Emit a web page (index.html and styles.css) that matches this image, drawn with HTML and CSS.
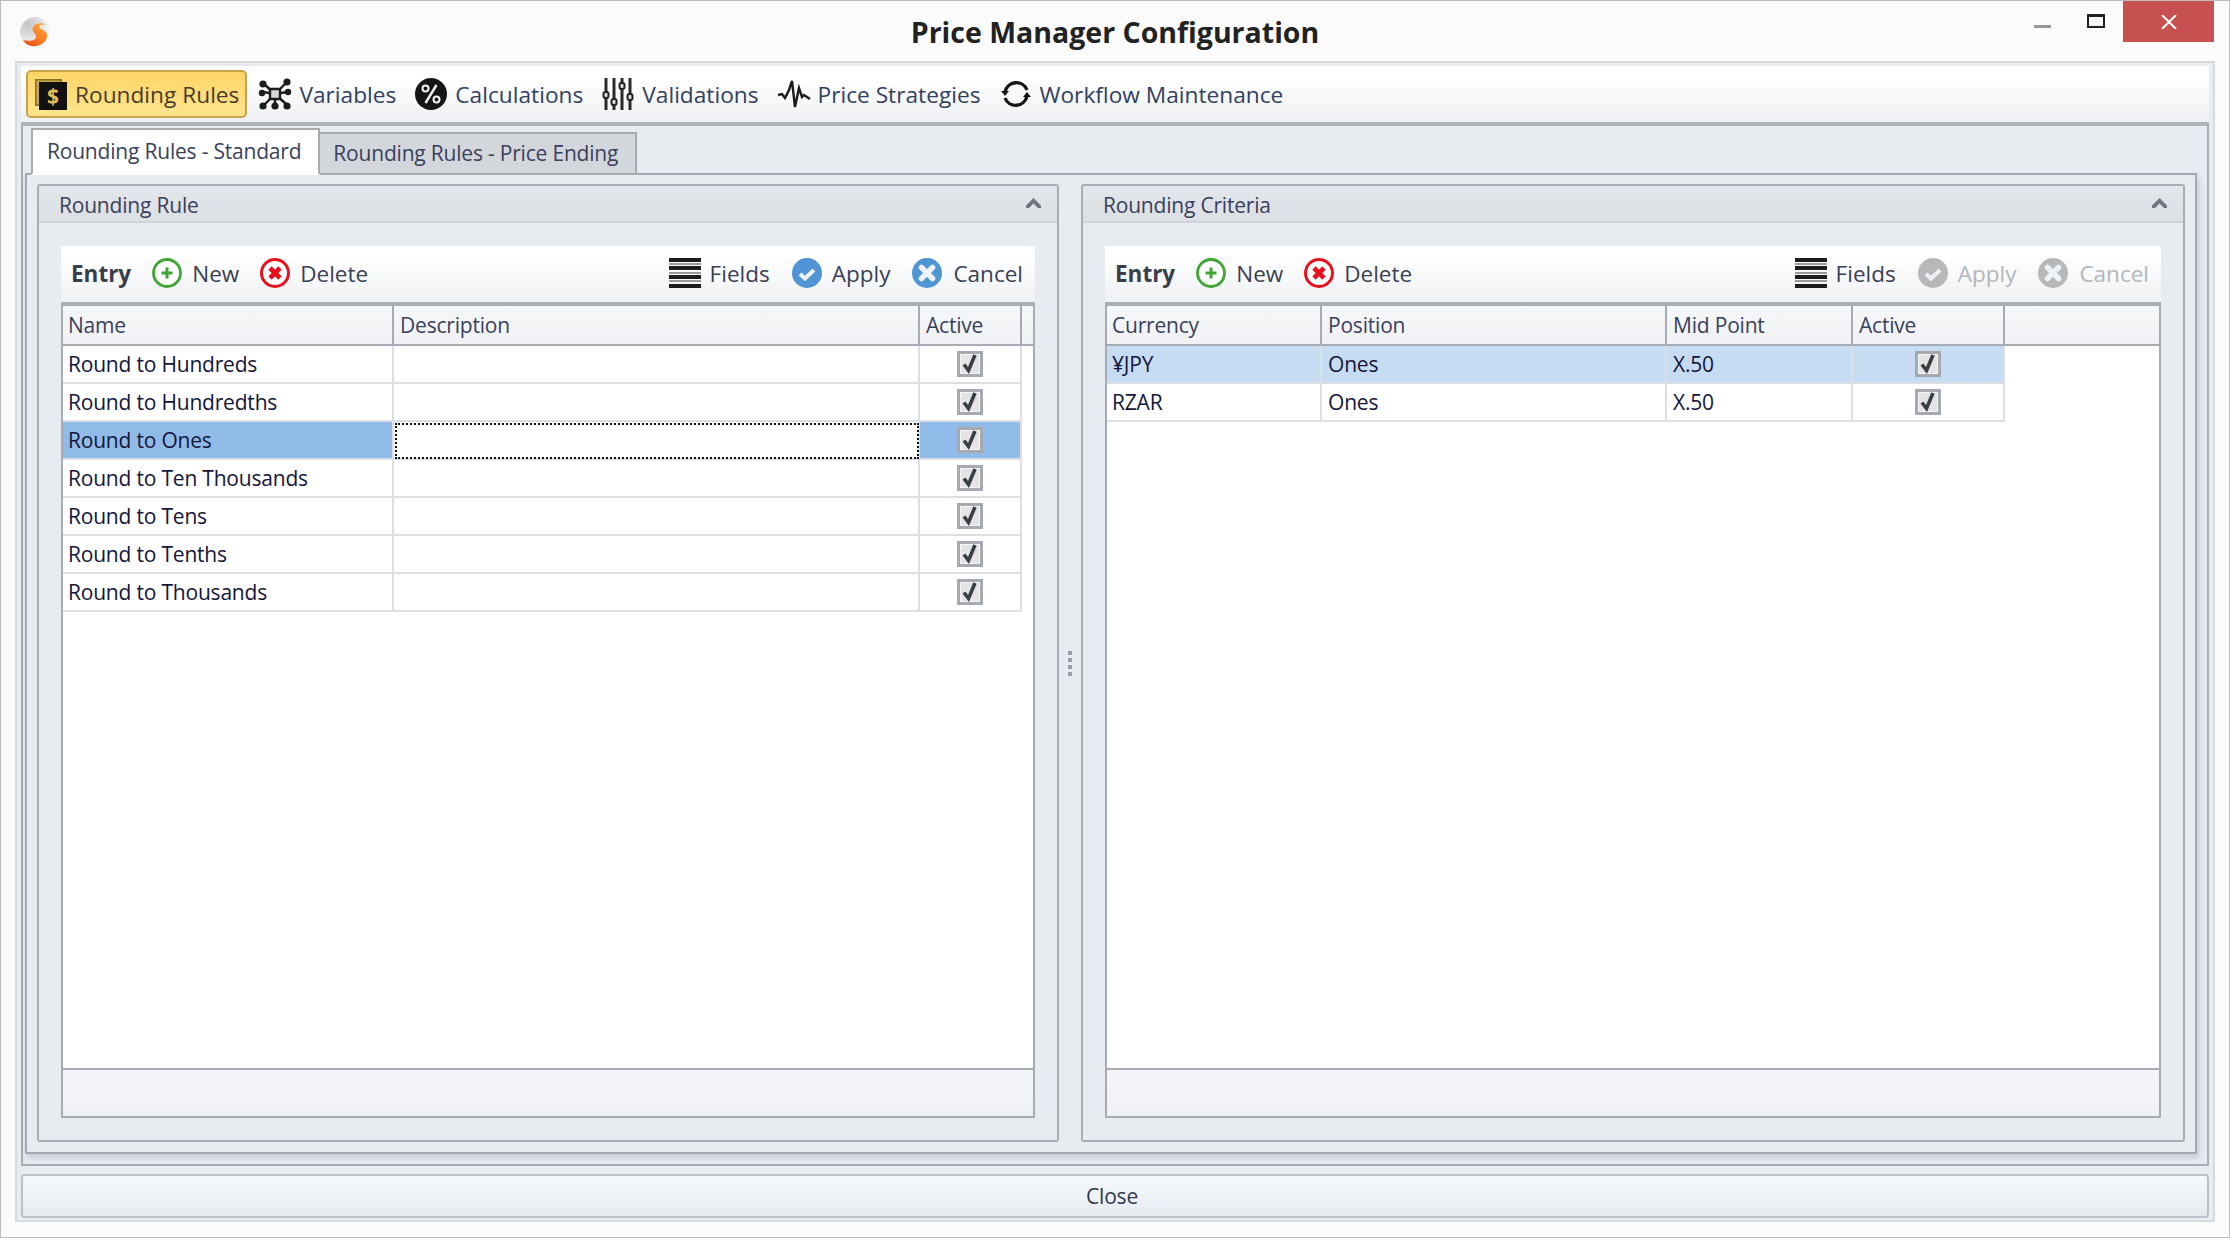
FILE: index.html
```html
<!DOCTYPE html>
<html lang="en">
<head>
  <meta charset="UTF-8">
  <title>Price Manager Configuration</title>
  <link rel="stylesheet" href="styles.css">
</head>
<body>
  <!-- Icones partagees -->
  <svg class="icon-defs" aria-hidden="true">
    <defs>
      <symbol id="i-plus" viewBox="0 0 30 30">
        <circle cx="15" cy="15" r="13.500" fill="#fff" stroke="#3fa535" stroke-width="2.800"/>
        <path d="M15 9.500v11M9.500 15h11" stroke="#3fa535" stroke-width="3"/>
      </symbol>
      <symbol id="i-delete" viewBox="0 0 30 30">
        <circle cx="15" cy="15" r="13.500" fill="#fff" stroke="#e8101c" stroke-width="3"/>
        <path d="M10 10l10 10M20 10l-10 10" stroke="#e8101c" stroke-width="4.600"/>
      </symbol>
      <symbol id="i-fields" viewBox="0 0 32 30">
        <path d="M0 0h32v4H0zM0 8h32v4H0zM0 17h32v4H0zM0 26h32v4H0z" fill="#1c1c1c"/>
        <path d="M0 5h32v2H0zM0 14h32v2H0zM0 22h32v2H0z" fill="#9a9a9a"/>
      </symbol>
      <symbol id="i-apply" viewBox="0 0 30 30">
        <circle cx="15" cy="15" r="15" fill="currentColor"/>
        <path d="M8 16l5 4.500 9-8.500" fill="none" stroke="#eef1f5" stroke-width="4.200"/>
      </symbol>
      <symbol id="i-cancel" viewBox="0 0 30 30">
        <circle cx="15" cy="15" r="15" fill="currentColor"/>
        <path d="M9.500 9.500l11 11M20.500 9.500l-11 11" stroke="#eef1f5" stroke-width="5.600" stroke-linecap="round"/>
      </symbol>
      <symbol id="i-check" viewBox="0 0 26 26">
        <path d="M1.500 1.500h23v23h-23z" fill="#e4e4e4" stroke="#a5a9b0" stroke-width="3"/>
        <path d="M3.500 3.500h19v19h-19z" fill="none" stroke="#f6f6f6" stroke-width="1"/>
        <path d="M7 13.500l4.500 6L18 4" fill="none" stroke="#3a3e45" stroke-width="3.600"/>
      </symbol>
      <symbol id="i-chevron" viewBox="0 0 15 11">
        <path d="M0 8.500L7.500 1 15 8.500v2.500h-3L7.500 6.500 3 11H0z" fill="#70757d"/>
      </symbol>
    </defs>
  </svg>

  <div class="window">
    <header class="titlebar">
      <div class="title-left">
        <svg class="logo" viewBox="0 0 30 32">
          <defs>
            <radialGradient id="logoBall" cx="0.25" cy="0.25" r="0.9">
              <stop offset="0" stop-color="#c4c4c4"/>
              <stop offset="0.6" stop-color="#e8e8e8"/>
              <stop offset="1" stop-color="#fbfbfb"/>
            </radialGradient>
            <linearGradient id="logoFlame" x1="0.7" y1="0" x2="0.2" y2="1">
              <stop offset="0" stop-color="#ffa43a"/>
              <stop offset="0.6" stop-color="#f97a22"/>
              <stop offset="1" stop-color="#e4501c"/>
            </linearGradient>
          </defs>
          <circle cx="15" cy="16" r="15" fill="url(#logoBall)"/>
          <path d="M27 9C22 6 15 7 13 11c-2 4 3 6 3 10 0 3-6 5-13 3 3 5 8 7 13 6 7-1 12-6 11-12-1-4-8-5-8-7 0-2 4-3 8-2z" fill="url(#logoFlame)"/>
        </svg>
      </div>
      <h1 class="title">Price Manager Configuration</h1>
      <div class="controls">
        <span class="ctl-min"></span>
        <span class="ctl-max"></span>
        <span class="ctl-close">
          <svg viewBox="0 0 16 14" width="16" height="14"><path d="M1 0l14 14M15 0L1 14" stroke="#fff" stroke-width="2"/></svg>
        </span>
      </div>
    </header>

    <div class="frame">
      <nav class="ribbon">
        <a class="rb-item active">
          <svg class="rb-icon" viewBox="0 0 32 32">
            <path d="M0 1h27v27H0z" fill="#8a7128"/>
            <path d="M1.500 2.500h24v24h-24z" fill="#c9a650"/>
            <path d="M4 4h28v28H4z" fill="#111"/>
            <text x="18" y="25.500" text-anchor="middle" class="rb-dollar">$</text>
          </svg>
          Rounding Rules
        </a>
        <a class="rb-item">
          <svg class="rb-icon" viewBox="0 0 32 32">
            <path d="M5 6l22 20M27 5L5 27M16 16v12M16 16L4 14M16 16l12-2" stroke="#1c1c1c" stroke-width="2.400"/>
            <g fill="#1c1c1c">
              <circle cx="28" cy="4" r="3.600"/><circle cx="4" cy="6" r="3.600"/>
              <circle cx="3" cy="15" r="3.200"/><circle cx="29" cy="14" r="3.200"/>
              <circle cx="4" cy="28" r="3.600"/><circle cx="16" cy="28" r="3.600"/><circle cx="28" cy="28" r="3.600"/>
            </g>
            <path d="M11 11h10v10H11z" fill="#d8d8d8" stroke="#1c1c1c" stroke-width="2.400"/>
          </svg>
          Variables
        </a>
        <a class="rb-item">
          <svg class="rb-icon" viewBox="0 0 32 32">
            <circle cx="16" cy="16" r="16" fill="#161616"/>
            <path d="M21.500 7L10.500 25" stroke="#f2f2f2" stroke-width="2.400"/>
            <circle cx="10.500" cy="10.500" r="3" fill="none" stroke="#f2f2f2" stroke-width="2"/>
            <circle cx="21.500" cy="21.500" r="3" fill="none" stroke="#f2f2f2" stroke-width="2"/>
          </svg>
          Calculations
        </a>
        <a class="rb-item">
          <svg class="rb-icon" viewBox="0 0 32 32">
            <path d="M4 0v32M12 0v32M20 0v32M28 0v32" stroke="#2a2a2a" stroke-width="3"/>
            <g fill="#ddd" stroke="#222" stroke-width="2">
              <rect x="1.500" y="14" width="5" height="6" rx="2"/>
              <rect x="9.500" y="21" width="5" height="6" rx="2"/>
              <rect x="17.500" y="5" width="5" height="6" rx="2"/>
              <rect x="25.500" y="16" width="5" height="6" rx="2"/>
            </g>
          </svg>
          Validations
        </a>
        <a class="rb-item">
          <svg class="rb-icon" viewBox="0 0 32 32">
            <path d="M0 17l4-1 3 4 4-8 3-9 3 26 4-19 3 9 2-2 6 4" fill="none" stroke="#1c1c1c" stroke-width="2.400"/>
          </svg>
          Price Strategies
        </a>
        <a class="rb-item">
          <svg class="rb-icon" viewBox="0 0 32 32">
            <path d="M5 14A11.500 11.500 0 0 1 27 12M27 18A11.500 11.500 0 0 1 5 20" fill="none" stroke="#151515" stroke-width="3.400"/>
            <path d="M1 13h8l-4 5zM31 19h-8l4-5z" fill="#151515"/>
          </svg>
          Workflow Maintenance
        </a>
      </nav>

      <div class="tab-area">
        <div class="tabs">
          <div class="tab selected">Rounding Rules - Standard</div>
          <div class="tab">Rounding Rules - Price Ending</div>
        </div>

        <div class="tab-body">
          <!-- Rounding Rule -->
          <section class="panel panel-rule">
            <div class="panel-head">
              <span>Rounding Rule</span>
              <svg class="chevron"><use href="#i-chevron"/></svg>
            </div>
            <div class="panel-inner">
              <div class="toolbar">
                <strong class="tb-title">Entry</strong>
                <a class="tb-btn tb-new"><svg class="tb-icon"><use href="#i-plus"/></svg>New</a>
                <a class="tb-btn tb-del"><svg class="tb-icon"><use href="#i-delete"/></svg>Delete</a>
                <span class="spacer"></span>
                <a class="tb-btn"><svg class="tb-icon tb-fields"><use href="#i-fields"/></svg>Fields</a>
                <a class="tb-btn tb-apply"><svg class="tb-icon"><use href="#i-apply"/></svg>Apply</a>
                <a class="tb-btn tb-cancel"><svg class="tb-icon"><use href="#i-cancel"/></svg>Cancel</a>
              </div>
              <div class="grid">
                <div class="row head">
                  <div class="cell">Name</div><div class="cell">Description</div><div class="cell">Active</div><div class="cell"></div>
                </div>
                <div class="row">
                  <div class="cell">Round to Hundreds</div><div class="cell"></div><div class="cell check"><svg class="chk"><use href="#i-check"/></svg></div>
                </div>
                <div class="row">
                  <div class="cell">Round to Hundredths</div><div class="cell"></div><div class="cell check"><svg class="chk"><use href="#i-check"/></svg></div>
                </div>
                <div class="row current">
                  <div class="cell">Round to Ones</div><div class="cell focus"></div><div class="cell check"><svg class="chk"><use href="#i-check"/></svg></div>
                </div>
                <div class="row">
                  <div class="cell">Round to Ten Thousands</div><div class="cell"></div><div class="cell check"><svg class="chk"><use href="#i-check"/></svg></div>
                </div>
                <div class="row">
                  <div class="cell">Round to Tens</div><div class="cell"></div><div class="cell check"><svg class="chk"><use href="#i-check"/></svg></div>
                </div>
                <div class="row">
                  <div class="cell">Round to Tenths</div><div class="cell"></div><div class="cell check"><svg class="chk"><use href="#i-check"/></svg></div>
                </div>
                <div class="row">
                  <div class="cell">Round to Thousands</div><div class="cell"></div><div class="cell check"><svg class="chk"><use href="#i-check"/></svg></div>
                </div>
                <div class="grid-fill"></div>
                <div class="grid-foot"></div>
              </div>
            </div>
          </section>

          <div class="splitter"><i></i><i></i><i></i><i></i></div>

          <!-- Rounding Criteria -->
          <section class="panel panel-criteria">
            <div class="panel-head">
              <span>Rounding Criteria</span>
              <svg class="chevron"><use href="#i-chevron"/></svg>
            </div>
            <div class="panel-inner">
              <div class="toolbar">
                <strong class="tb-title">Entry</strong>
                <a class="tb-btn tb-new"><svg class="tb-icon"><use href="#i-plus"/></svg>New</a>
                <a class="tb-btn tb-del"><svg class="tb-icon"><use href="#i-delete"/></svg>Delete</a>
                <span class="spacer"></span>
                <a class="tb-btn"><svg class="tb-icon tb-fields"><use href="#i-fields"/></svg>Fields</a>
                <a class="tb-btn tb-apply disabled"><svg class="tb-icon"><use href="#i-apply"/></svg>Apply</a>
                <a class="tb-btn tb-cancel disabled"><svg class="tb-icon"><use href="#i-cancel"/></svg>Cancel</a>
              </div>
              <div class="grid">
                <div class="row head">
                  <div class="cell">Currency</div><div class="cell">Position</div><div class="cell">Mid Point</div><div class="cell">Active</div><div class="cell"></div>
                </div>
                <div class="row picked">
                  <div class="cell">¥JPY</div><div class="cell">Ones</div><div class="cell">X.50</div><div class="cell check"><svg class="chk"><use href="#i-check"/></svg></div>
                </div>
                <div class="row">
                  <div class="cell">RZAR</div><div class="cell">Ones</div><div class="cell">X.50</div><div class="cell check"><svg class="chk"><use href="#i-check"/></svg></div>
                </div>
                <div class="grid-fill"></div>
                <div class="grid-foot"></div>
              </div>
            </div>
          </section>
        </div>
      </div>

      <button class="close-btn">Close</button>
    </div>
  </div>
</body>
</html>
```

FILE: styles.css
```css
* {
  box-sizing: border-box;
}

html, body {
  height: 100%;
}

body {
  margin: 0;
  font-family: 'Open Sans', 'Noto Sans', sans-serif;
  font-size: 21px;
  letter-spacing: -0.2px;
  color: #2c3048;
  overflow: hidden;
}

.icon-defs {
  position: absolute;
  width: 0;
  height: 0;
}

.window {
  height: 100vh;
  display: flex;
  flex-direction: column;
  background: #fbfbfb;
  border: 1px solid #bdbdbd;
  padding-bottom: 15px;
}

/* Barre de titre */
.titlebar {
  height: 60px;
  flex: none;
  display: grid;
  grid-template-columns: 1fr auto 1fr;
  align-items: start;
}

.title-left {
  padding: 15px 0 0 19px;
}

.logo {
  width: 30px;
  height: 32px;
  display: block;
}

.title {
  margin: 12px 0 0;
  font-size: 28.5px;
  line-height: 38px;
  font-weight: 700;
  letter-spacing: 0;
  color: #222;
}

.controls {
  justify-self: end;
  display: flex;
  align-items: flex-start;
  margin-right: 15px;
}

.ctl-min {
  width: 17px;
  height: 3px;
  background: #999;
  margin-top: 24px;
}

.ctl-max {
  width: 18px;
  height: 14px;
  border: 2px solid #222;
  border-top-width: 3px;
  margin: 13px 18px 0 36px;
}

.ctl-close {
  width: 91px;
  height: 41px;
  background: #c75050;
  display: flex;
  align-items: center;
  justify-content: center;
}

/* Cadre principal */
.frame {
  flex: 1;
  min-height: 0;
  margin: 0 14px;
  display: flex;
  flex-direction: column;
  background: #e8ebf0;
  border: 2px solid #d6d9dd;
  padding: 3px 4px 2px 4px;
}

.ribbon {
  height: 60px;
  flex: none;
  display: flex;
  align-items: center;
  gap: 12px;
  padding-left: 5px;
  font-size: 22.7px;
  letter-spacing: 0;
  background: linear-gradient(to bottom, #fff 20%, #eff1f4 100%);
  border-bottom: 4px solid #b0b4ba;
}

.rb-item {
  display: flex;
  align-items: center;
  gap: 8px;
  color: #33405e;
  white-space: nowrap;
  margin-right: 7px;
}

.rb-item.active {
  height: 48px;
  padding: 0 6px 0 7px;
  margin-right: 0;
  background: linear-gradient(to bottom, #ffd566, #ffe48e);
  border: 2px solid #c9a24a;
  border-radius: 5px;
  color: #4a3a2a;
}

.rb-icon {
  width: 32px;
  height: 32px;
  flex: none;
  overflow: visible;
}

.rb-dollar {
  font-size: 21px;
  font-weight: 700;
  fill: #e5bd55;
}

/* Onglets */
.tab-area {
  flex: 1;
  min-height: 0;
  display: flex;
  flex-direction: column;
  border: 2px solid #a8acb4;
  border-top: none;
  padding: 0 10px 10px 2px;
}

.tabs {
  height: 49px;
  flex: none;
  display: flex;
  align-items: flex-end;
  padding-left: 6px;
  position: relative;
  z-index: 1;
  margin-bottom: -2px;
}

.tab {
  height: 43px;
  padding: 0 17px 2px 13px;
  display: flex;
  align-items: center;
  background: #d3d7dc;
  border: 2px solid #a6abb2;
  border-left: none;
  color: #3a3f5c;
}

.tab.selected {
  height: 47px;
  background: #fff;
  border-left: 2px solid #a6abb2;
  border-bottom: 2px solid #fff;
  padding: 0 17px 2px 14px;
}

.tab-body {
  flex: 1;
  min-height: 0;
  display: flex;
  border: 2px solid #a3a8b2;
  padding: 9px 10px 10px;
  box-shadow: 2px 4px 6px rgba(90, 96, 110, 0.22);
}

/* Panneaux */
.panel {
  display: flex;
  flex-direction: column;
  border: 2px solid #a8adb5;
  border-radius: 3px;
}

.panel-rule {
  width: 1022px;
}

.panel-criteria {
  flex: 1;
}

.splitter {
  width: 22px;
  flex: none;
  display: flex;
  flex-direction: column;
  justify-content: center;
  align-items: center;
  gap: 3px;
}

.splitter i {
  width: 4px;
  height: 4px;
  background: #9ba0a8;
}

.panel-head {
  height: 37px;
  flex: none;
  display: flex;
  align-items: center;
  justify-content: space-between;
  padding: 3px 16px 0 20px;
  background: linear-gradient(to bottom, #e3e6ea, #dcdfe4);
  border-bottom: 2px solid #cfd2d8;
  color: #3a3f5c;
}

.chevron {
  width: 15px;
  height: 11px;
  margin-bottom: 6px;
}

.panel-inner {
  flex: 1;
  min-height: 0;
  display: flex;
  flex-direction: column;
  padding: 23px 22px 22px 22px;
}

/* Barre d'outils */
.toolbar {
  height: 60px;
  flex: none;
  display: flex;
  align-items: center;
  padding: 0 12px 2px 10px;
  font-size: 22.5px;
  letter-spacing: 0;
  background: linear-gradient(to bottom, #fff 15%, #eff1f4 100%);
  border-bottom: 4px solid #a9aeb6;
  color: #3b3f52;
}

.tb-title {
  font-weight: 700;
  margin-right: 21px;
  color: #3a3d4a;
}

.tb-btn {
  display: flex;
  align-items: center;
  gap: 9px;
  white-space: nowrap;
}

.tb-new {
  gap: 10px;
  margin-right: 21px;
}

.tb-del {
  gap: 10px;
}

.tb-icon {
  width: 30px;
  height: 30px;
  flex: none;
}

.tb-fields {
  width: 32px;
}

.tb-apply {
  gap: 10px;
  margin-left: 22px;
  color: #3b3f52;
}

.tb-apply .tb-icon,
.tb-cancel .tb-icon {
  color: #4f94d4;
}

.tb-cancel {
  gap: 11px;
  margin-left: 22px;
}

.tb-btn.disabled {
  color: #b3b5ba;
}

.tb-btn.disabled .tb-icon {
  color: #b7b8ba;
}

.spacer {
  flex: 1;
}

/* Grilles */
.grid {
  flex: 1;
  min-height: 0;
  display: flex;
  flex-direction: column;
  background: #fff;
  border: solid #a6abb3;
  border-width: 0 2px 2px 2px;
  color: #14163a;
}

.row {
  height: 38px;
  flex: none;
  display: grid;
}

.panel-rule .row {
  grid-template-columns: 331px 526px 102px;
}

.panel-rule .row.head {
  grid-template-columns: 331px 526px 102px 1fr;
}

.panel-criteria .row {
  grid-template-columns: 215px 345px 186px 152px;
}

.panel-criteria .row.head {
  grid-template-columns: 215px 345px 186px 152px 1fr;
}

.cell {
  padding: 0 6px;
  display: flex;
  align-items: center;
  border-right: 2px solid #dcdfe3;
  border-bottom: 2px solid #dcdfe3;
  white-space: nowrap;
}

.cell:first-child {
  padding-left: 5px;
}

.row.head {
  height: 40px;
  color: #3a3f5c;
  background: linear-gradient(to bottom, #f6f7f9, #eff1f4);
}

.row.head .cell {
  border-right-color: #a6abb3;
  border-bottom-color: #a6abb3;
}

.row.head .cell:last-child {
  border-right: none;
}

.row.current .cell {
  background: #90bbe8;
}

.row.current .cell.focus {
  background: #fff;
  outline: 2px dotted #111;
  outline-offset: -3px;
}

.row.picked .cell {
  background: #c6dcf3;
}

.cell.check {
  justify-content: center;
  padding: 0;
}

.chk {
  width: 26px;
  height: 26px;
  margin-bottom: 1px;
}

.grid-fill {
  flex: 1;
}

.grid-foot {
  height: 48px;
  flex: none;
  background: linear-gradient(to bottom, #f4f5f8, #f0f2f5);
  border-top: 2px solid #a6abb3;
}

/* Bouton Fermer */
.close-btn {
  height: 44px;
  flex: none;
  margin: 8px 0 0 0;
  padding: 0 6px 0 0;
  font: inherit;
  letter-spacing: -0.2px;
  color: #33384c;
  background: linear-gradient(to bottom, #f5f9fc, #e7eaee);
  border: 2px solid #bcc0c6;
  border-radius: 4px;
}
```
